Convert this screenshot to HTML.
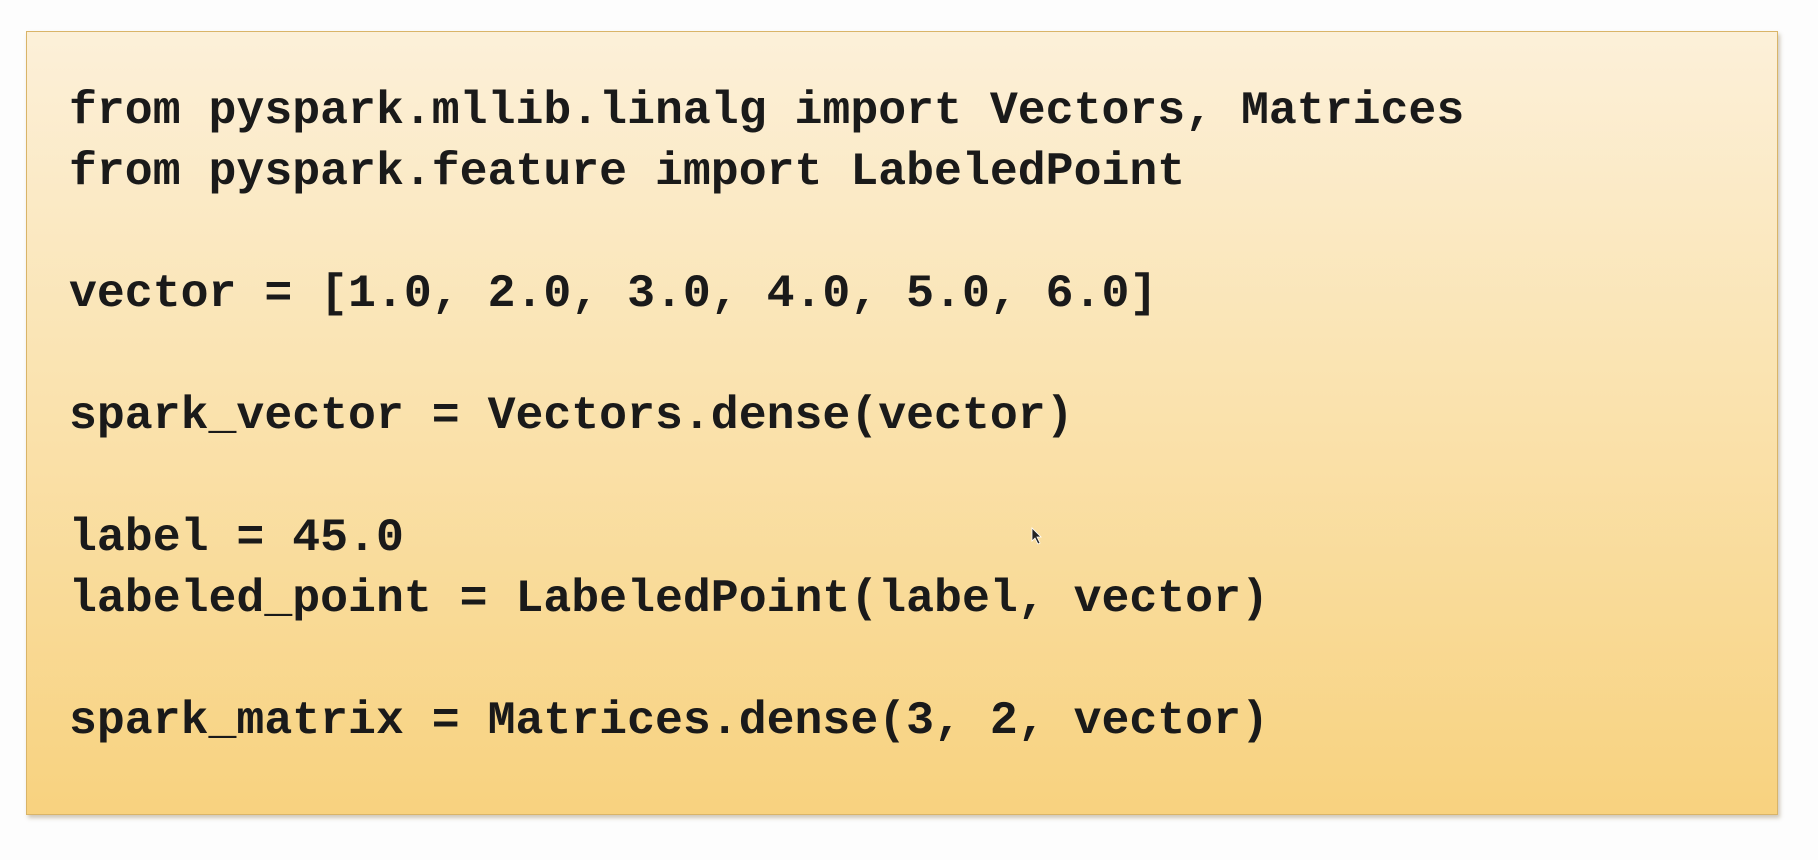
<!DOCTYPE html>
<html><head><style>
html,body{margin:0;padding:0;background:#fdfdfd;width:1818px;height:860px;overflow:hidden}
.box{position:absolute;left:26px;top:31px;width:1752px;height:784px;box-sizing:border-box;
border:1.5px solid #d9b468;background:linear-gradient(#fcf0d9 0%,#fae3b0 45%,#f8d27f 100%);
box-shadow:2px 3px 4px rgba(120,100,60,0.35)}
pre{position:absolute;left:69px;top:80px;margin:0;font-family:"Liberation Mono","Courier New",monospace;
font-weight:bold;font-size:46.5px;line-height:61px;color:#1a1a1a}
</style></head><body>
<div class="box"></div>
<pre>from pyspark.mllib.linalg import Vectors, Matrices
from pyspark.feature import LabeledPoint

vector = [1.0, 2.0, 3.0, 4.0, 5.0, 6.0]

spark_vector = Vectors.dense(vector)

label = 45.0
labeled_point = LabeledPoint(label, vector)

spark_matrix = Matrices.dense(3, 2, vector)</pre>
<svg style="position:absolute;left:1031px;top:527px" width="12" height="18" viewBox="0 0 12 18"><path d="M1 1 L1 14 L4 11 L7 17 L9 16 L6 10 L10 10 Z" fill="#222" stroke="#fff" stroke-width="0.8"/></svg>
</body></html>
